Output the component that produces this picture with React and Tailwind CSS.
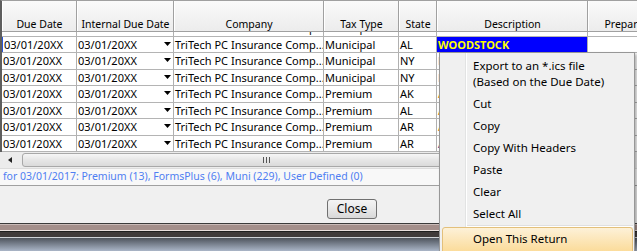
import React from "react";

const cols = "grid grid-cols-[75px_97px_150px_75px_38px_151px_76px_60px]";

const headers = ["Due Date", "Internal Due Date", "Company", "Tax Type", "State", "Description", "Preparer", ""];

const rows = [
  { tax: "Municipal", state: "AL", desc: "WOODSTOCK", selected: true },
  { tax: "Municipal", state: "NY", desc: "NEW YORK", color: "text-[#1a237e]" },
  { tax: "Municipal", state: "NY", desc: "NEW YORK", color: "text-[#1a237e]" },
  { tax: "Premium", state: "AK", desc: "ALASKA", color: "text-[#e07b00]" },
  { tax: "Premium", state: "AL", desc: "ALABAMA", color: "text-[#e07b00]" },
  { tax: "Premium", state: "AR", desc: "ARKANSAS", color: "text-[#e07b00]" },
  { tax: "Premium", state: "AR", desc: "ARKANSAS", color: "text-[#1a237e]" },
];

const DropArrow = () => (
  <svg width="7" height="4" viewBox="0 0 7 4" className="mt-[5px] shrink-0">
    <polygon points="0,0 7,0 3.5,4" fill="#000" />
  </svg>
);

const Cell = ({ children, className = "" }) => (
  <div className={`border-r border-[#b0b0b0] pl-px overflow-hidden whitespace-nowrap leading-[16px] ${className}`}>
    {children}
  </div>
);

const Row = ({ row, className = "" }) => (
  <div className={`${cols} h-[16.5px] border-b border-[#b4b4b4] text-[11px] text-black ${className}`}>
    <Cell className={row.selected ? "border-l border-l-[#2a55d6]" : ""}>03/01/20XX</Cell>
    <Cell className="flex justify-between pr-[2px]">
      <span>03/01/20XX</span>
      <DropArrow />
    </Cell>
    <Cell>TriTech PC Insurance Comp...</Cell>
    <Cell>{row.tax}</Cell>
    <Cell>{row.state}</Cell>
    {row.selected ? (
      <Cell className="bg-[#0000ff] text-[#ffff00] font-bold">{row.desc}</Cell>
    ) : (
      <Cell className={row.color || ""}>{row.desc}</Cell>
    )}
    <Cell></Cell>
    <Cell></Cell>
  </div>
);

const MenuItem = ({ children }) => (
  <div className="pl-[31px] py-[3px] leading-[16px]">{children}</div>
);

export default function App() {
  return (
    <div className="w-[637px] h-[251px] relative overflow-hidden bg-[#f0f0f0] font-['Noto_Sans',sans-serif] flex flex-col">
      {/* Grid */}
      <div className="h-[152px] shrink-0 border-t border-t-[#a0a0a0] border-l-2 border-l-[#5e5e5e] bg-white overflow-hidden flex flex-col">
        <div className={`${cols} h-[31px] shrink-0 border-b border-[#a0a0a0]`}>
          {headers.map((h, i) => (
            <div
              key={i}
              className="bg-[linear-gradient(#fafafa,#ececec)] border-r border-[#a0a0a0] border-l border-l-white flex items-end justify-center text-[10.5px] leading-[13px] text-black whitespace-nowrap overflow-hidden"
            >
              {h}
            </div>
          ))}
        </div>
        <div className="flex-1 overflow-hidden">
          <Row row={{ tax: "Municipal", state: "AL", desc: "WOODLAND" }} className="-mt-[12px]" />
          {rows.map((r, i) => (
            <Row key={i} row={r} />
          ))}
        </div>
      </div>

      {/* Horizontal scrollbar */}
      <div className="h-4 shrink-0 bg-[#ececec] flex items-center">
        <div className="w-[20px] h-full flex items-center justify-center">
          <svg width="4" height="6" viewBox="0 0 4 6">
            <polygon points="4,0 4,6 0,3" fill="#222" />
          </svg>
        </div>
        <div className="ml-[2px] w-[488px] h-[14px] rounded-[3px] border border-[#a8a8a8] bg-[linear-gradient(#f6f6f6,#e6e6e6_50%,#dadada)] flex items-center justify-center gap-[2px]">
          <span className="w-px h-[6px] bg-[#555]" />
          <span className="w-px h-[6px] bg-[#555]" />
          <span className="w-px h-[6px] bg-[#555]" />
        </div>
      </div>

      {/* Status line */}
      <div className="h-[17px] shrink-0 bg-[#f8f8f8] border-t border-[#dcdcdc] pl-[3px] text-[10.5px] leading-[15px] text-[#4f7ef2] whitespace-nowrap">
        for 03/01/2017: Premium (13), FormsPlus (6), Muni (229), User Defined (0)
      </div>
      <div className="h-px shrink-0 bg-[#a0a0a0]" />

      {/* Button area */}
      <div className="h-[37px] shrink-0 pl-[327px] pt-[13px] flex items-start">
        <button className="w-[50px] h-[20px] rounded-[3px] border border-[#707070] bg-[linear-gradient(#f4f4f4,#e8e8e8_50%,#d8d8d8)] text-[12px] leading-[16px] text-black">
          Close
        </button>
      </div>

      {/* Window frame bottom */}
      <div className="h-px shrink-0 bg-[#3b3b3b]" />
      <div className="h-px shrink-0 bg-[#c9bab7]" />
      <div className="h-[5px] shrink-0 bg-[#a48f8b]" />
      <div className="h-px shrink-0 bg-[#e8dedc]" />
      <div className="h-px shrink-0 bg-[#1e1e1e]" />
      <div className="h-[5px] shrink-0 bg-[#3f3a3a]" />
      <div className="h-px shrink-0 bg-[#cfd3d8]" />
      <div className="flex-1 bg-[linear-gradient(#4e545d,#aab5c7)]" />

      {/* Context menu */}
      <div className="absolute left-[439px] top-[52px] w-[196px] h-[222px] border border-[#979797] pl-[2px] pr-px pt-[2px] bg-[linear-gradient(to_right,#f0f0f0_25px,#e2e3e3_25px,#e2e3e3_26px,#ffffff_26px,#ffffff_27px,#f0f0f0_27px)] shadow-[2px_2px_3px_rgba(0,0,0,0.3)] text-[11.5px] text-black">
        <MenuItem>
          Export to an *.ics file
          <br />
          (Based on the Due Date)
        </MenuItem>
        <MenuItem>Cut</MenuItem>
        <MenuItem>Copy</MenuItem>
        <MenuItem>Copy With Headers</MenuItem>
        <MenuItem>Paste</MenuItem>
        <MenuItem>Clear</MenuItem>
        <MenuItem>Select All</MenuItem>
        <div className="ml-[25px] h-[2px] border-t border-[#e0e0e0] border-b border-b-white" />
        <div className="h-[28px] rounded-[3px] border border-[#e3c07b] bg-[linear-gradient(#fdf1d8,#fbd993)] pl-[30px] leading-[22px]">
          Open This Return
        </div>
      </div>
    </div>
  );
}
